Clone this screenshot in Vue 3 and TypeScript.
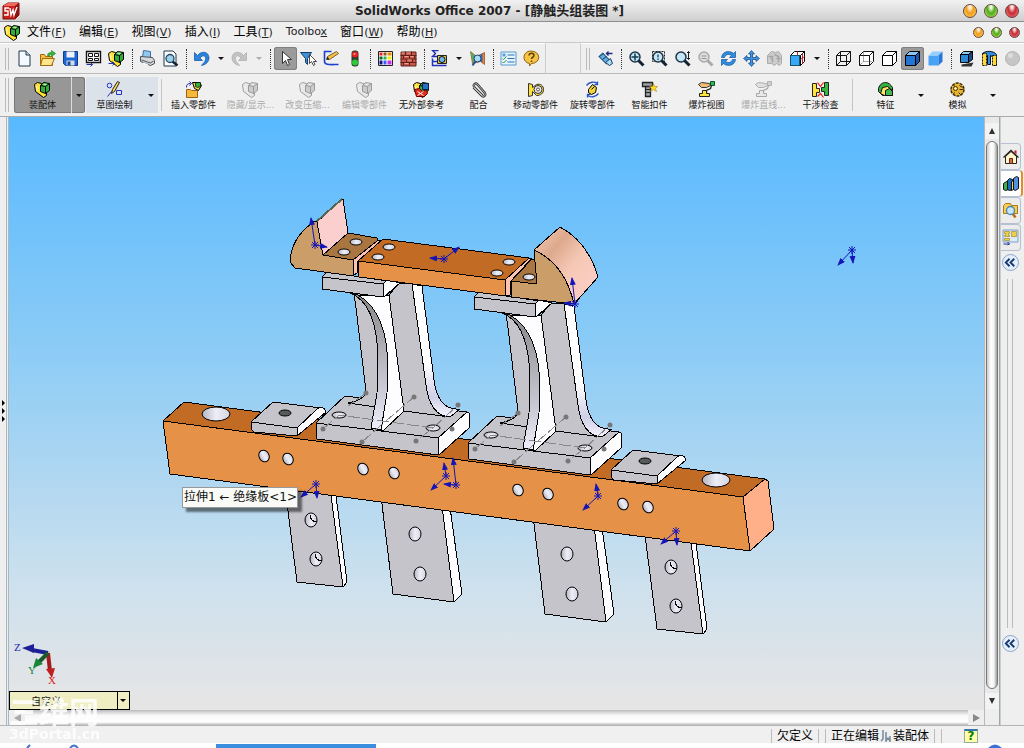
<script setup lang="ts">
interface Tool { kind?: 'sep' | 'arrow'; icon?: string; label?: string; active?: boolean; dim?: boolean }
interface Command { icon: string; label: string; dim?: boolean }
interface Triad { x: number; y: number; tips: [number, number][] }

const cube = (front: string, top: string, side: string, w = 1): string =>
  `<path fill="${front}" stroke="#000" stroke-width="${w}" d="M1 5h10v10H1z"/><path fill="${top}" stroke="#000" stroke-width="${w}" d="M1 5l4-4h10l-4 4z"/><path fill="${side}" stroke="#000" stroke-width="${w}" d="M11 5l4-4v10l-4 4z"/>`
const lens = (inner: string): string =>
  `<path d="M10 10l5 5" stroke="#123" stroke-width="3"/><circle cx="6.5" cy="6.5" r="5" fill="#c4e6f6" stroke="#1d3548" stroke-width="1.5"/>${inner}`
const block = '<path fill="#ffe13a" stroke="#000" d="M0 3l3-2 4 1v6l5 3v3l-3 2-8-6z"/><path fill="#fff5a0" d="M1 4l2 1v5L2 9z"/><path fill="#2fae3c" stroke="#000" d="M6 4l3-3 6 1v7l-4 3-5-2z"/><path d="M6 4l5 1 4-3M11 5v7" stroke="#000" fill="none"/><path fill="#a4eca0" d="M8 3.500l2-1.500 3 .5-2 1.500z"/>'

const icons: Record<string, string> = {
  block,
  blank: '<path fill="#f4f9ff" stroke="#23364c" d="M2.500 .5h7l4 4v11h-11z"/><path fill="#bdd7ee" stroke="#23364c" d="M9.500 .5v4h4"/>',
  open: '<path fill="#f4bd3f" stroke="#a06a10" d="M1 4h4l1 2h7v9H1z"/><path fill="#ffe58c" stroke="#a06a10" d="M3 8h12l-3 7H1z"/><path d="M8 5c0-3 3-3 4-3V0l4 3-4 3V4c-2 0-2 0-2 2z" fill="#35b536" stroke="#197a1c" stroke-width=".6"/>',
  save: '<path fill="#1e67d3" stroke="#123c86" d="M1 1h14v14H3l-2-2z"/><path fill="#eef3fa" d="M4 1h8v6H4z"/><path fill="#d5dbe5" d="M4 10h8v5H4z"/><path fill="#1a4b9c" d="M5 11h3v4H5z"/>',
  sheet: '<path fill="#fff" stroke="#111" stroke-width="1.400" d="M1 1h14v11H1z"/><path fill="none" stroke="#111" d="M3 3h4v3H3zM9 3h4v3H9zM3 8h4v2H3zM9 8h4v2H9z"/><path d="M1 14h6M5 12l2 2-2 2" stroke="#23a" fill="none"/>',
  blockArrow: block + '<path d="M0 13h6M4 11l2 2-2 2" stroke="#23a" fill="none"/>',
  print: '<path fill="#8fc9ee" stroke="#3f6f9a" d="M4 0l7 1v7l-8-1z"/><path fill="#d5d8dc" stroke="#4c5157" d="M1 6l12 1 2 3v3l-4 2-10-4z"/><path fill="#555" d="M2 9l9 3 3-2v1l-3 2-9-3z"/><path fill="#fff" d="M4 12l5 2-2 1-4-2z"/>',
  preview: '<path fill="#fff" stroke="#23364c" d="M1.500 .5h9l3 3v12h-12z"/><path d="M10 11l5 4" stroke="#123" stroke-width="2.500"/><circle cx="7.500" cy="8" r="4" fill="#9fd0ea" stroke="#1d4868" stroke-width="1.300"/>',
  undo: '<path d="M1 2v8h8L6.500 7.500C9 4 13 5 12 9c-.5 3-3 4-4 6 5-1 7.500-4 7.500-8C15 1 8 0 4 5z" fill="#2a83dc" stroke="#0e4f9a" stroke-width=".7"/>',
  redo: '<path d="M15 2v8H7l2.500-2.500C7 4 3 5 4 9c.5 3 3 4 4 6C3 14 .5 11 .5 7 1 1 8 0 12 5z" fill="#c3c3c3" stroke="#aaa" stroke-width=".7"/>',
  cursor: '<path d="M5 1v12l3-3 2 5 2-1-2-5h4z" fill="#fff" stroke="#333"/>',
  filter: '<path d="M0 2h11L7 8v6l-2-2V8z" fill="#3f90d4" stroke="#123d66"/><path d="M9 4v9l2-2 2 4 1.500-1-1.500-3h3z" fill="#fff" stroke="#222" stroke-width=".8"/>',
  sketch: '<path d="M8 1H1v10c0 4 6 3 14 3" fill="none" stroke="#1b3fd0" stroke-width="1.600"/><path d="M3 9l1-3L13 1l2 2-9 6z" fill="#ffbd42" stroke="#663"/><path fill="#222" d="M3 9l1-3 2 3z"/>',
  light: '<rect x="5" y="0" width="7" height="16" rx="3" fill="#2c3b33"/><circle cx="8.500" cy="4" r="3" fill="#e5231c"/><circle cx="8.500" cy="12" r="3" fill="#2dcc35"/><circle cx="8" cy="3.500" r="1" fill="#ff9a90"/>',
  palette: '<path fill="#fff" stroke="#222" d="M1 1h14v14H1z"/><path fill="#e22" d="M2 2h3v3H2z"/><path fill="#852" d="M6 2h3v3H6z"/><path fill="#e80" d="M10 2h4v3h-4z"/><path fill="#063" d="M2 6h3v3H2z"/><path fill="#3a5" d="M6 6h3v3H6z"/><path fill="#ee1" d="M10 6h4v3h-4z"/><path fill="#118" d="M2 10h3v4H2z"/><path fill="#36e" d="M6 10h3v4H6z"/><path fill="#c3d" d="M10 10h4v4h-4z"/>',
  brick: '<path fill="#c8584a" stroke="#5f201b" d="M.5 1.500h15v14H.5z"/><path stroke="#651f1a" d="M0 5h16M0 8.500h16M0 12h16M5 1v4M11 1v4M3 5v3M9 5v3M14 5v3M6 9v3M12 9v3M3 12v3M9 12v3"/><path stroke="#e8a48e" d="M1 2.500h3M6 2.500h4M4 6h4M10 6h3M7 9.500h4M4 13h4"/>',
  measure: '<path d="M7 0H1l3 3-3 3h6" fill="none" stroke="#1b2fb0" stroke-width="1.300"/><path d="M1 8v7h14M1 11h5" stroke="#23b" fill="none" stroke-width="1.500"/><path fill="#e0c33e" stroke="#222" d="M6 5h9v8H6z"/><circle cx="10.500" cy="9" r="3" fill="#6cb6e6" stroke="#113"/>',
  check: '<path d="M1 1l6 5 8-4v12l-4-3-8 2z" fill="#f08431" stroke="#8a4a15" stroke-width=".7"/><path d="M1 1l8 8-5 4z" fill="#42b364"/><path d="M11 4l2-1v9l-2-1z" fill="#2f66c4"/><circle cx="8" cy="8" r="3.500" fill="#a8dcf2" stroke="#19407b"/><path d="M6 11l-3 4" stroke="#234f9c" stroke-width="2"/>',
  list: '<path fill="#e4f3fd" stroke="#5b99cc" d="M.5 1.500h15v13H.5z"/><path stroke="#2d72b8" d="M7 4.500h7M7 8h7M7 11.500h7"/><path fill="#5da0d8" d="M2 3h3v3H2z"/><path d="M2 8l1 1 3-3M2 11.500l1 1 3-3" stroke="#2a9a44" fill="none"/>',
  help: '<path d="M8 .6a7 6 0 0 1 0 12.400l-2 2.500V13A6.500 6.200 0 0 1 8 .6z" fill="#f6c343" stroke="#8b6410"/><path d="M5.500 5c0-3 5-3 5 0 0 2-2.500 1.500-2.500 3.500M8 10v1.600" stroke="#5e430a" stroke-width="1.500" fill="none"/>',
  scope: '<path d="M3 4l8 8" stroke="#173a66" stroke-width="6"/><path d="M3 4l8 8" stroke="#5eb1e0" stroke-width="4"/><path d="M2 6l4-3M5 9l4-3" stroke="#173a66"/><path fill="#a8def5" stroke="#173a66" d="M8 12l5-4 2 5-3 2z"/><path d="M15 3H9M11 1L9 3l2 2" stroke="#1a2a86" fill="none" stroke-width="1.300"/>',
  zoomFit: lens('<path d="M6.500 3v7M3 6.500h7" stroke="#13384e" stroke-width="1.500"/>'),
  zoomArea: '<path d="M1 1h12v10H1z" fill="none" stroke="#222" stroke-dasharray="2 1"/>' + lens('<path d="M6.500 4v3M6.500 8v1.500" stroke="#13384e" stroke-width="1.200"/>'),
  zoomIn: lens('<path d="M14 1v8M12.500 2.500L14 1l1.500 1.500M12.500 7.500L14 9l1.500-1.500" stroke="#222" fill="none"/>'),
  zoomOut: '<path d="M10 10l5 5" stroke="#aaa" stroke-width="3"/><circle cx="6.500" cy="6.500" r="5" fill="#ddd" stroke="#aaa" stroke-width="1.500"/><path d="M4 5.500h5M4 8h5" stroke="#999"/>',
  rotate: '<path d="M1 7c1-7 9-7 12-4l2-2v6H9l2-2C8 3 5 4 4 7zM15 9c-1 7-9 7-12 4l-2 2V9h6l-2 2c3 2 6 1 7-2z" fill="#2f8de0" stroke="#15549c" stroke-width=".7"/>',
  pan: '<path d="M8 0l3 3.500H9V7h3.500V5L16 8l-3.500 3V9H9v3.500h2L8 16l-3-3.500h2V9H3.500v2L0 8l3.500-3v2H7V3.500H5z" fill="#3a96e8" stroke="#123e7a" stroke-width=".7"/>',
  views: '<path d="M1 5l4-4 4 1 3-1 3 4v8l-2 2-3-2-2 2-3-2H1z" fill="#ccc" stroke="#aaa"/><path d="M2 6h4v6M8 4l4 2v6M4 8h1M10 8h4" stroke="#a4a4a4" stroke-width="1.400" fill="none"/>',
  viewCube: cube('#2a9df0', '#fff', '#fff') + '<path d="M8 1v4M13 3v10M11 9l4-3" stroke="#d22"/><path fill="#38a8f8" stroke="#156" d="M1 5h9v10H1z"/>',
  wire: '<path d="M1 5h10v10H1zM5 1h10v10H5zM1 5l4-4M11 5l4-4M11 15l4-4M1 15l4-4" fill="none" stroke="#111"/>',
  hidden: '<path d="M1 5h10v10H1zM1 5l4-4h10v10l-4 4M11 5l4-4" fill="#fff" stroke="#111"/><path d="M5 2v9h9M5 11l-4 4" fill="none" stroke="#555" stroke-dasharray="1 1"/>',
  lined: cube('#fff', '#fff', '#fff'),
  shadedEdge: cube('#2375d8', '#84c8fb', '#1b55ad'),
  shaded: '<path fill="#4aa2f5" d="M1 5h10v10H1z"/><path fill="#94cdff" d="M1 5l4-4h10l-4 4z"/><path fill="#2478dc" d="M11 5l4-4v10l-4 4z"/>',
  shadow: '<path fill="#333" d="M3 14l12-2-2 4H3z"/><path fill="#2a8ad6" stroke="#000" d="M2 4h8v8H2z"/><path fill="#8bd0f5" stroke="#000" d="M2 4l3-3h9l-4 3z"/><path fill="#184c8c" stroke="#000" d="M10 4l4-3v8l-4 3z"/>',
  section: '<path fill="#2f8be0" stroke="#111" d="M1 3c3-3 11-3 14 1v11h-3V7L9 5v9H6V5L1 4z"/><path fill="#ffd831" stroke="#111" stroke-dasharray="2 1" d="M1 3h4v12H1zM11 5h4v10h-4z"/>',
  ball: '<circle cx="8" cy="8" r="7" fill="#c6c6c6" stroke="#b4b4b4"/><circle cx="6" cy="5" r="2.500" fill="#ddd"/>',
  draft: '<circle cx="3" cy="4" r="2.300" fill="none" stroke="#23b"/><path fill="none" stroke="#23b" d="M10 9h5v4h-5zM1 15L6 9"/><path d="M5 12l1-4 5-8 2 1-5 9z" fill="#ffd75d" stroke="#222"/>',
  insert: '<path d="M1 8h4l1 1h6v7H1z" fill="#f6b93c" stroke="#9a6312"/><path d="M1 6c0-3 1-4 4-4M4 0l2 2-2 2" stroke="#22a" fill="none"/><path d="M7 1h7l2 3-3 5-4-2z" fill="#f4d93a" stroke="#000"/><path d="M10 1h5v4l-3 1-2-1z" fill="#35b03f" stroke="#000" stroke-width=".7"/>',
  external: block + '<path d="M1 8l5-1 3 3 4-2 1 4-3 3H3z" fill="#e22c1c" stroke="#600"/><path fill="#2772c9" stroke="#123" d="M9 2h6v6H9z"/><path d="M4 10l6 4M10 10l-6 4" stroke="#fff"/>',
  clip: '<path d="M12 14L4 6c-2-3 1-5 3-3l7 8c2 3-1 5-3 3L3 6" fill="none" stroke="#333" stroke-width="2.400"/><path d="M12 14L4 6c-2-3 1-5 3-3l7 8c2 3-1 5-3 3L3 6" fill="none" stroke="#ddd" stroke-width=".8"/>',
  move: '<path d="M1 2l4 1v3l4-3c4-1 7 1 7 5s-3 6-7 6l-4-4v4l-4 1z" fill="#ffe03a" stroke="#333"/><circle cx="10.500" cy="8" r="4" fill="#e8e8e8" stroke="#333"/><circle cx="10.500" cy="8" r="1.500" fill="#fff" stroke="#555"/>',
  turn: '<path d="M2 4c3-4 8-4 11-2M13 0v3h-3M14 12c-3 4-8 4-11 2M3 16v-3h3" fill="none" stroke="#2755c8" stroke-width="1.300"/><path d="M4 8l4-5 4 3-1 5-4 2-3-2z" fill="#f4d637" stroke="#000"/><path d="M7 8l3-3" stroke="#000"/>',
  smart: '<path d="M1 1h10v4H1zM4 5h5v10H4z" fill="#9ba1a5" stroke="#222" stroke-width="1.300"/><path d="M4 8h5M4 11h5" stroke="#222"/><path d="M12 2l1 3h3l-2 2 1 3-3-2-3 2 1-3-2-2h3z" fill="#ffdf2d" stroke="#a48110" stroke-width=".6"/>',
  explode: '<path d="M0 3l3-2 8 1 1 2-4 2H3z" fill="#f2bb74" stroke="#333"/><path fill="#38b848" stroke="#053" d="M12 0h4v4h-4z"/><path d="M13 4l-1 3-4 2v3" stroke="#222" fill="none" stroke-width="1.300"/><path d="M1 12h3V9h4v3h3v3H1z" fill="#f8e43c" stroke="#222"/>',
  clash: '<path d="M0 2h4v5h3v4H4v4H0z" fill="#ffe23a" stroke="#222"/><path d="M16 1h-4v5H9v4h3v4h4z" fill="#34b641" stroke="#222"/><path d="M5 1l3 4 3-4M5 15l3-3 3 4" stroke="#e21" fill="none" stroke-width="1.200"/>',
  feature: '<path d="M1 10V7c1-4 4-6 7-6s5 2 7 5v8H5z" fill="#35b141" stroke="#111"/><path d="M3 12l2-6 5-1 5 4v5H7z" fill="#ffe462" stroke="#111"/><path d="M8 14V9l4-2 3 3v4z" fill="#42ba4e" stroke="#111"/>',
  gear: '<circle cx="8" cy="8" r="6.500" fill="#e8b532" stroke="#3a2b05" stroke-width="1.500" stroke-dasharray="3 1"/><circle cx="6" cy="7" r="2" fill="#fff0a0" stroke="#3a2b05"/><path d="M10 4l3 2M10 8h4M9 11l2 2M5 11l-1 2M4 3l1 2" stroke="#3a2b05"/>',
  home: '<path fill="#fff7c9" stroke="#222" d="M3 8v7h11V8L8.500 3z"/><path d="M1 9l7.500-7L16 9" stroke="#222" fill="none" stroke-width="1.300"/><path fill="#c12" d="M12 2h2v4l-2-2z"/><path fill="#d7722a" stroke="#622" d="M7 10h3v5H7z"/>',
  library: '<path fill="#35b54c" stroke="#111" d="M0 8l3-2 2 1v7l-3 1-2-1z"/><path fill="#1b6dc0" stroke="#111" d="M4 5l2-2 3 1v10l-3 1-2-1z"/><path fill="#ffe03a" stroke="#111" d="M8 6l2-1v9l-2 1z"/><path fill="#5590e4" stroke="#111" d="M10 3l3-2 2 1v11l-3 2-2-1z"/>',
  search: '<path fill="#f8cb51" stroke="#ad7b1c" d="M1 3l2-2h5l1 2h6v8H1z"/><path d="M10 11l3 4" stroke="#b56b1a" stroke-width="2.500"/><circle cx="8" cy="8" r="4" fill="#c3e7fb" stroke="#4a85ae" stroke-width="1.300"/>',
  views2: '<path fill="#dce9f8" stroke="#7aa0cf" d="M.5 .5h15v12H.5z"/><path fill="#ecd04a" stroke="#a98d26" stroke-width=".7" d="M2 2h5v2H6v2h1v1H2V6h1V4H2zM9 2h5v5H9zM2 9h5v2H2z"/><path d="M1 14.500h6M5 12.500l2 2-2 1" stroke="#1c2f9a" fill="none"/>',
}

const sep: Tool = { kind: 'sep' }
const standardTools: Tool[] = [
  { icon: 'blank', label: '新建' }, { icon: 'open', label: '打开' }, { icon: 'save', label: '保存' },
  { icon: 'sheet', label: '工程图' }, { icon: 'blockArrow', label: '装配' }, sep,
  { icon: 'print', label: '打印' }, { icon: 'preview', label: '预览' }, sep,
  { icon: 'undo', label: '撤销' }, { kind: 'arrow', label: '撤销列表' },
  { icon: 'redo', label: '重做' }, { kind: 'arrow', label: '重做列表', dim: true }, sep,
  { icon: 'cursor', label: '选择', active: true }, { icon: 'filter', label: '过滤器' },
  { icon: 'sketch', label: '草图' }, { icon: 'light', label: '重建' }, sep,
  { icon: 'palette', label: '颜色' }, { icon: 'brick', label: '纹理' }, sep,
  { icon: 'measure', label: '测量' }, { kind: 'arrow', label: '测量列表' }, { icon: 'check', label: '检查' }, sep,
  { icon: 'list', label: '选项' }, { icon: 'help', label: '帮助' },
]
const viewTools: Tool[] = [
  { icon: 'scope', label: '上一视图' }, sep,
  { icon: 'zoomFit', label: '整屏显示' }, { icon: 'zoomArea', label: '局部放大' }, { icon: 'zoomIn', label: '放大' },
  { icon: 'zoomOut', label: '放大选取' }, { icon: 'rotate', label: '旋转' }, { icon: 'pan', label: '平移' },
  { icon: 'views', label: '三维视图' }, { icon: 'viewCube', label: '视图定向' }, { kind: 'arrow', label: '视图列表' }, sep,
  { icon: 'wire', label: '线架图' }, { icon: 'hidden', label: '隐藏线可见' }, { icon: 'lined', label: '消除隐藏线' },
  { icon: 'shadedEdge', label: '带边线上色', active: true }, { icon: 'shaded', label: '上色' }, sep,
  { icon: 'shadow', label: '阴影' }, { icon: 'section', label: '剖面' }, { icon: 'ball', label: '渲染' },
]
const commands: Command[] = [
  { icon: 'insert', label: '插入零部件' },
  { icon: 'block', label: '隐藏/显示...', dim: true },
  { icon: 'block', label: '改变压缩...', dim: true },
  { icon: 'block', label: '编辑零部件', dim: true },
  { icon: 'external', label: '无外部参考' },
  { icon: 'clip', label: '配合' },
  { icon: 'move', label: '移动零部件' },
  { icon: 'turn', label: '旋转零部件' },
  { icon: 'smart', label: '智能扣件' },
  { icon: 'explode', label: '爆炸视图' },
  { icon: 'explode', label: '爆炸直线...', dim: true },
  { icon: 'clash', label: '干涉检查' },
]
const tailCommands: Command[] = [{ icon: 'feature', label: '特征' }, { icon: 'gear', label: '模拟' }]
const menus: [string, string, string][] = [
  ['文件', 'F', ''], ['编辑', 'E', ''], ['视图', 'V', ''], ['插入', 'I', ''], ['工具', 'T', ''],
  ['', 'x', 'Toolbo'], ['窗口', 'W', ''], ['帮助', 'H', ''],
]
const lights: string[] = ['amber', 'green', 'red']
const paneTabs: { icon: string; label: string }[] = [
  { icon: 'home', label: '资源' }, { icon: 'library', label: '设计库' },
  { icon: 'search', label: '文件探索器' }, { icon: 'views2', label: '查看调色板' },
]

const beamHoles: [number, number][] = [[264, 456], [288, 459], [363, 469], [394, 473], [518, 490], [548, 494], [623, 504], [648, 507]]
const sketchDots: [number, number][] = [[366, 393], [414, 397], [458, 405], [323, 429], [362, 442], [416, 441], [452, 429]]
const triads: Triad[] = [
  { x: 315, y: 245, tips: [[311, 218], [327, 247]] },
  { x: 444, y: 259, tips: [[459, 247], [430, 258]] },
  { x: 575, y: 304, tips: [[572, 278], [564, 303]] },
  { x: 852, y: 250, tips: [[838, 265], [853, 263]] },
  { x: 446, y: 476, tips: [[444, 463], [431, 490]] },
  { x: 456, y: 485, tips: [[453, 458], [444, 484]] },
  { x: 316, y: 484, tips: [[301, 497], [317, 498]] },
  { x: 598, y: 496, tips: [[596, 484], [583, 510]] },
  { x: 676, y: 531, tips: [[661, 544], [677, 545]] },
]
const star = (t: Triad): string =>
  `M${t.x - 4} ${t.y}h8M${t.x} ${t.y - 4}v8M${t.x - 3} ${t.y - 3}l6 6M${t.x + 3} ${t.y - 3}l-6 6`
</script>

<template>
  <div class="window">
    <header class="titlebar">
      <svg class="logo" viewBox="0 0 18 18" aria-hidden="true">
        <path d="M1 4l5-3h11v12l-4 4H1z" fill="#c8201c" stroke="#7c0f0d" />
        <path d="M1 4l5-3h11l-4 3z" fill="#f0695c" />
        <path d="M13 4l4-3v12l-4 4z" fill="#8d1210" />
        <path d="M7 6H3v3h3v4H2M8 6l1 7 2-5 1 5 3-8" fill="none" stroke="#fff" stroke-width="1.400" />
      </svg>
      <h1>SolidWorks Office 2007 - [<span>静触头组装图</span> *]</h1>
      <div class="lights">
        <button v-for="c in lights" :key="c" type="button" :class="['orb', c]" :aria-label="c"></button>
      </div>
    </header>

    <nav class="menubar">
      <svg class="logo" viewBox="-.5 -.5 17 17" aria-hidden="true" v-html="icons.block"></svg>
      <button v-for="m in menus" :key="m[1]" type="button" class="menu"><template v-if="m[0]"><span class="han">{{ m[0] }}</span>(<u>{{ m[1] }}</u>)</template><template v-else>{{ m[2] }}<u>{{ m[1] }}</u></template></button>
      <div class="lights small">
        <button v-for="c in lights" :key="c" type="button" :class="['orb', c]" :aria-label="'文档 ' + c"></button>
      </div>
    </nav>

    <div class="toolrow">
      <div class="strip">
        <span class="grip"></span>
        <template v-for="(t, i) in standardTools" :key="i">
          <span v-if="t.kind === 'sep'" class="dots"></span>
          <button v-else-if="t.kind === 'arrow'" type="button" :class="['drop', { dim: t.dim }]" :aria-label="t.label"></button>
          <button v-else type="button" :class="['tool', { active: t.active }]" :aria-label="t.label">
            <svg viewBox="-.5 -.5 17 17" v-html="icons[t.icon!]"></svg>
          </button>
        </template>
      </div>
      <div class="strip second">
        <span class="grip"></span>
        <template v-for="(t, i) in viewTools" :key="i">
          <span v-if="t.kind === 'sep'" class="dots"></span>
          <button v-else-if="t.kind === 'arrow'" type="button" class="drop" :aria-label="t.label"></button>
          <button v-else type="button" :class="['tool', { active: t.active }]" :aria-label="t.label">
            <svg viewBox="-.5 -.5 17 17" v-html="icons[t.icon!]"></svg>
          </button>
        </template>
      </div>
    </div>

    <div class="commandrow">
      <span class="grip"></span>
      <div class="mode pressed">
        <button type="button" class="cmd"><svg viewBox="-.5 -.5 17 17" v-html="icons.block"></svg>装配体</button>
        <button type="button" class="drop" aria-label="装配体列表"></button>
      </div>
      <div class="mode pale">
        <button type="button" class="cmd"><svg viewBox="-.5 -.5 17 17" v-html="icons.draft"></svg>草图绘制</button>
        <button type="button" class="drop" aria-label="草图绘制列表"></button>
      </div>
      <span class="rule"></span>
      <button v-for="c in commands" :key="c.label" type="button" :class="['cmd', { dim: c.dim }]">
        <svg viewBox="-.5 -.5 17 17" v-html="icons[c.icon]"></svg>{{ c.label }}
      </button>
      <span class="rule"></span>
      <div v-for="c in tailCommands" :key="c.label" class="mode tail">
        <button type="button" class="cmd"><svg viewBox="-.5 -.5 17 17" v-html="icons[c.icon]"></svg>{{ c.label }}</button>
        <button type="button" class="drop" :aria-label="c.label + '列表'"></button>
      </div>
    </div>

    <main class="workspace">
      <div class="splitter"><i></i><i></i><i></i></div>
      <section class="view">
        <div class="canvas">
          <svg class="scene" viewBox="9 117 975 593" role="img" aria-label="静触头组装图">
            <defs>
              <linearGradient id="web" x1="0" y1="0" x2="0" y2="1">
                <stop offset="0" stop-color="#858588" /><stop offset=".35" stop-color="#aaaab0" />
                <stop offset=".75" stop-color="#d0d0dc" /><stop offset="1" stop-color="#f0f0fc" />
              </linearGradient>
              <linearGradient id="fillet" x1="0" y1="0" x2="0" y2="1">
                <stop offset=".6" stop-color="#fff" /><stop offset=".85" stop-color="#cfcfe6" /><stop offset="1" stop-color="#f4f4ff" />
              </linearGradient>
              <linearGradient id="blade" x1="0" y1="0" x2="1" y2="1">
                <stop offset="0" stop-color="#f8cdb8" /><stop offset=".3" stop-color="#dda98d" />
                <stop offset=".55" stop-color="#f5c8b5" /><stop offset="1" stop-color="#ffd0cc" />
              </linearGradient>
              <linearGradient id="bore" x1="0" y1="0" x2="1" y2="0">
                <stop offset="0" stop-color="#b4b4be" /><stop offset=".5" stop-color="#eeeef8" /><stop offset="1" stop-color="#d4d4df" />
              </linearGradient>
              <marker id="tip" viewBox="0 0 8 6" refX="7" refY="3" markerWidth="8" markerHeight="6" markerUnits="userSpaceOnUse" orient="auto">
                <path d="M0 0l8 3-8 3z" fill="#1414b8" />
              </marker>
              <g id="narrowLeg">
                <path class="gray" d="M284 480l13 102 46 5-14-107z" />
                <path class="white" d="M329 480l14 107 4-5-13-102z" />
                <g class="bore"><ellipse cx="311" cy="520" rx="6" ry="7" /><ellipse cx="316" cy="559" rx="6" ry="7" /></g>
                <path class="line" d="M310 515q1 7 7 7M315 554q1 7 7 7" />
              </g>
              <g id="wideLeg">
                <path class="gray" d="M381 496l12 98 61 8-13-104z" />
                <path class="white" d="M441 498l13 104 8-8-13-94z" />
                <g class="bore"><ellipse cx="415" cy="534" rx="6" ry="7" /><ellipse cx="420" cy="574" rx="6" ry="7" /></g>
              </g>
              <g id="pad">
                <path class="gray" d="M251 422l22-20 48 6-24 20z" />
                <path class="gray" d="M251 422l46 6v8l-43-4-3-3z" />
                <path class="white" d="M297 428l20-19q7-4 9 3l-29 24z" />
                <g class="bore"><ellipse cx="285" cy="413" rx="6" ry="3" class="deep" /></g>
              </g>
              <g id="column">
                <path class="gray" d="M316 423l29-27 122 16-29 26z" />
                <path class="gray" d="M316 423l122 15v17l-121-16z" />
                <path class="white" d="M438 438l29-26 2 1v15l-30 27z" />
                <g class="bore"><ellipse cx="339" cy="415" rx="7" ry="3" /><ellipse cx="433" cy="428" rx="7" ry="3" /></g>
                <path d="M354 294l2 14 10 83q-1 9-18 12l28 4 5-80-16-32z" fill="#c6c4cb" />
                <path class="line" d="M354 294l2 14 10 83q-1 9-18 12l28 4" />
                <path d="M350 293q27 10 28 66l-1 34-6 35 10 2 6-37 1-23q0-58-30-75z" fill="url(#web)" stroke="#000" />
                <path class="white" d="M358 295q30 17 30 75l-1 23-6 37h3l20-19-4-31-11-85z" />
                <path class="gray" d="M389 295l10-12 13 1 14 101q4 31 24 32l-46-6-4-31z" />
                <path d="M412 284l10 2 12 94q4 31 26 29l-10 8q-20-1-24-32z" fill="url(#fillet)" stroke="#000" />
                <path class="gray" d="M322 277l5-5 61 9-5 3v13l-61-8z" />
                <path class="line" d="M322 277l61 7" />
                <path class="white" d="M383 284l4-4 13 3-16 14z" />
                <path d="M323 429l16-14 94 13-17 13M362 442l18-16 34-29M433 428l25-23M366 393l-18 13" fill="none" stroke="#888" stroke-dasharray="12 3" />
                <g class="round"><circle v-for="(d, i) in sketchDots" :key="i" :cx="d[0]" :cy="d[1]" r="2.500" fill="#777" /></g>
              </g>
            </defs>

            <g class="model">
              <use href="#narrowLeg" /><use href="#wideLeg" />
              <use href="#wideLeg" x="152" y="20" /><use href="#narrowLeg" x="360" y="47" />

              <path d="M163 421l21-19 581 77-22 18z" fill="#c26b24" stroke="#000" />
              <path d="M163 421l580 76 7 54-580-77z" fill="#e59248" stroke="#000" />
              <path d="M743 497l22-18 3 2 6 48-24 22z" fill="#ffb089" stroke="#000" />
              <g class="bore">
                <ellipse cx="216" cy="414" rx="14" ry="7" /><ellipse cx="716" cy="480" rx="14" ry="7" />
                <ellipse v-for="(h, i) in beamHoles" :key="i" :cx="h[0]" :cy="h[1]" rx="5" ry="6" :transform="`rotate(-30 ${h[0]} ${h[1]})`" />
              </g>
              <use href="#pad" /><use href="#pad" x="360" y="48" />
              <use href="#column" /><use href="#column" x="152" y="20" />

              <path d="M323 255l25-22 29 5v3l-24 19z" fill="#a97642" stroke="#000" />
              <path d="M317 222l25-23h1l5 34-25 22z" fill="#fccfcf" stroke="#000" />
              <path d="M316 222l26-23" stroke="#565" stroke-width="2" />
              <path d="M290 262q1-25 25-41l2 1 6 33 30 5v16l-58-8z" fill="#cb9d69" stroke="#000" />
              <path d="M353 260l24-19 5-1-24 21-1 12-4 3z" fill="#ffc4b0" stroke="#000" />
              <path d="M358 261l25-22 146 19-24 22z" fill="#c26b24" stroke="#000" />
              <path d="M358 261l147 19 1 16-147-19z" fill="#e59248" stroke="#000" />
              <path d="M505 280l24-22h3l-21 23-1 14-4 1z" fill="#ffc4b0" stroke="#000" />
              <path d="M511 281l21-22h3l2 25z" fill="#a97642" stroke="#000" />
              <path d="M534 250l26-23q28 15 38 50l-24 27z" fill="url(#blade)" stroke="#000" />
              <path d="M534 250q31 14 40 54l-63-7v-16l26 3z" fill="#cb9d69" stroke="#000" />
              <g class="bore">
                <ellipse cx="356" cy="242" rx="6" ry="3" /><ellipse cx="344" cy="252" rx="6" ry="3" />
                <ellipse cx="389" cy="247" rx="6" ry="3" /><ellipse cx="378" cy="257" rx="6" ry="3" />
                <ellipse cx="509" cy="262" rx="6" ry="3" /><ellipse cx="497" cy="273" rx="6" ry="3" />
                <ellipse cx="529" cy="277" rx="6" ry="3" />
              </g>
            </g>

            <g v-for="(t, i) in triads" :key="i" stroke="#1414b8" fill="none">
              <path :d="star(t)" />
              <line v-for="(p, j) in t.tips" :key="j" :x1="t.x" :y1="t.y" :x2="p[0]" :y2="p[1]" marker-end="url(#tip)" />
            </g>

            <g fill="none" stroke-width="4">
              <path d="M48 653l-16-3" stroke="#1c2195" /><path d="M22 648l12-4v9z" fill="#1c2195" />
              <path d="M48 653l2 18" stroke="#a51b1b" /><path d="M52 678l-6-9 9-1z" fill="#c01f1f" />
              <path d="M48 653l-9 9" stroke="#1c5a2b" /><path d="M33 668l3-10 7 6z" fill="#1b8636" />
            </g>
            <g class="axis">
              <text x="14" y="651" fill="#2424b4">Z</text><text x="28" y="674" fill="#1b8636">Y</text><text x="48" y="684" fill="#e01818">X</text>
            </g>
          </svg>
          <div class="tooltip">拉伸1 ← 绝缘板&lt;1&gt;</div>
          <label class="config"><select aria-label="视图配置"><option>自定义</option></select></label>
          <div class="watermark"><b>三维网</b><span>3dPortal.cn</span></div>
        </div>
        <div class="hscroll"><button type="button" class="left" aria-label="向左"></button><button type="button" class="right" aria-label="向右"></button></div>
      </section>
      <div class="vscroll">
        <button type="button" class="up" aria-label="向上"></button>
        <span class="thumb"></span>
        <button type="button" class="down" aria-label="向下"></button>
        <span class="corner"></span>
      </div>
      <aside class="pane">
        <button v-for="(p, i) in paneTabs" :key="p.icon" type="button" :class="['tab', { current: i === 1 }]" :aria-label="p.label">
          <svg viewBox="-.5 -.5 17 17" v-html="icons[p.icon]"></svg>
        </button>
        <button type="button" class="collapse" aria-label="展开"><svg viewBox="0 0 16 16"><path d="M7 4L3 8l4 4M12 4L8 8l4 4" /></svg></button>
        <span class="rail"></span>
        <button type="button" class="collapse" aria-label="收起"><svg viewBox="0 0 16 16"><path d="M7 4L3 8l4 4M12 4L8 8l4 4" /></svg></button>
      </aside>
    </main>

    <footer class="status">
      <span class="cell">欠定义</span><span class="cell gap"></span><span class="cell">正在编辑<svg class="hourglass" viewBox="0 0 12 12"><path d="M3 0v9l-2 2M6 2v9l2-3 2 3V6" /></svg>装配体</span><span class="cell gap"></span><span class="cell gap"></span>
      <button type="button" class="hint" aria-label="快速提示">?</button>
    </footer>
    <div class="edge">
      <svg class="marks" viewBox="0 0 216 4"><path d="M27 4l3-3M70 4q4-5 8 0" stroke="#3f72c8" stroke-width="2" fill="none" /></svg>
      <i></i>
      <svg class="dome" viewBox="0 0 14 4"><path d="M0 4q7-7 14 0z" fill="#3b70d8" /></svg>
    </div>
  </div>
</template>

<style>
body { margin: 0; }
</style>

<style scoped>
.window { min-height: 100vh; display: flex; flex-direction: column; background: #efefef; color: #111; font: 12px/16px "DejaVu Sans", "Noto Sans CJK SC", sans-serif; overflow: hidden; }
button { appearance: none; border: 0; padding: 0; margin: 0; background: none; font: inherit; color: inherit; }
.titlebar { height: 21px; display: flex; align-items: center; background: linear-gradient(#f1f1f1, #cfcfcf); border-bottom: 1px solid #8f8f8f; }
.logo { width: 18px; height: 18px; margin-left: 2px; flex: none; }
h1 { flex: 1; margin: 0; padding-right: 4px; text-align: center; font-size: 12px; line-height: 20px; font-weight: 700; color: #222; white-space: nowrap; }
h1 span { font-size: 13px; }
.lights { display: flex; gap: 7px; margin-right: 5px; }
.lights.small { margin-left: auto; gap: 7px; margin-right: 4px; }
.orb { width: 14px; height: 14px; border-radius: 50%; border: 1px solid #644; }
.small .orb { width: 11px; height: 11px; }
.amber { background: radial-gradient(ellipse at 50% 15%, #fff6dd 10%, #f09a20 45%, #ffdc50 95%); }
.green { background: radial-gradient(ellipse at 50% 15%, #f0ffe0 10%, #52a81c 45%, #b4f060 95%); }
.red { background: radial-gradient(ellipse at 50% 15%, #ffe4e4 10%, #c42a34 45%, #ff7c7c 95%); }
.menubar { height: 20px; display: flex; align-items: center; gap: 13px; border-bottom: 1px solid #c9c9c9; }
.menubar .logo { width: 17px; height: 17px; margin: 0 -7px 0 4px; }
.menu { font-size: 11px; line-height: 18px; color: #222; white-space: nowrap; }
.han { font-size: 12px; color: #000; }
.toolrow { height: 30px; display: flex; border-bottom: 1px solid #bbb; }
.strip { display: flex; align-items: center; padding-right: 2px; border-right: 1px solid #ccc; border-top: 1px solid #fff; }
.second { margin-left: 34px; border-left: 1px solid #ccc; flex: 1; padding: 0; border-right: 0; }
.grip { width: 2px; height: 22px; margin: 0 4px 0 5px; border-left: 1px solid #bbb; border-right: 1px solid #bbb; flex: none; }
.tool { width: 23px; height: 23px; flex: none; display: flex; align-items: center; justify-content: center; border-radius: 3px; }
.tool svg { width: 17px; height: 17px; }
.tool.active { background: #9b9b9b; box-shadow: inset 0 0 0 1px #7f7f7f; }
.dots { width: 0; height: 20px; margin: 0 3px 0 4px; border-left: 1px dotted #333; flex: none; }
.drop { width: 15px; height: 22px; flex: none; display: flex; align-items: center; justify-content: center; }
.drop::after { content: ""; border: 3px solid transparent; border-top-color: #111; border-bottom: 0; }
.drop.dim { opacity: .3; }
.commandrow { height: 43px; display: flex; align-items: center; background: #f0f0f0; border-bottom: 1px solid #aaa; box-sizing: border-box; }
.commandrow > .grip { height: 34px; margin-right: 5px; }
.mode { display: flex; align-items: center; height: 36px; flex: none; }
.mode .drop { height: 36px; }
.pressed { background: #979797; border-radius: 3px; box-shadow: inset 0 0 0 1px #777; }
.pressed .drop { border-left: 1px solid #ddd; width: 14px; }
.pale { background: #dce2ea; margin-left: 1px; }
.cmd { width: 57px; flex: none; display: flex; flex-direction: column; align-items: center; gap: 1px; font-size: 9px; line-height: 12px; white-space: nowrap; padding-top: 2px; }
.cmd svg { width: 17px; height: 17px; }
.cmd.dim { color: #aaa; }
.cmd.dim svg { filter: grayscale(1); opacity: .35; }
.rule { height: 32px; border-left: 1px solid #c4c4c4; margin: 0 3px; flex: none; }
.tail .cmd { margin-left: 2px; width: 55px; }
.workspace { flex: 1; display: flex; min-height: 0; }
.splitter { width: 6px; display: flex; flex-direction: column; align-items: center; justify-content: center; gap: 2px; padding-bottom: 20px; border-right: 3px double #a7b8c0; flex: none; }
.splitter i { border: 3px solid transparent; border-left-color: #000; border-right: 0; }
.view { flex: 1; min-width: 0; display: flex; flex-direction: column; }
.canvas { flex: 1; position: relative; background: linear-gradient(#58b9ff 0%, #8acbf6 38%, #cfe1ed 80%, #e5e5e6 98%); }
.scene { display: block; width: 100%; height: 100%; }
.model { stroke-linejoin: round; shape-rendering: crispEdges; }
.gray { fill: #c6c4cb; stroke: #000; }
.white { fill: #fdfdff; stroke: #000; }
.line { fill: none; stroke: #000; }
.bore { fill: url(#bore); stroke: #000; shape-rendering: geometricPrecision; }
.deep { fill: #555a5a; }
.round { shape-rendering: geometricPrecision; }
.axis { font: 11px "Liberation Serif", serif; }
.tooltip { position: absolute; left: 173px; top: 370px; padding: 1px 0 1px 1px; background: #fafaf7; border: 1px solid #999; box-shadow: 4px 4px 2px rgba(0, 0, 0, .5); font-size: 12px; line-height: 17px; white-space: nowrap; }
.config { position: absolute; left: 0; bottom: 0; width: 121px; height: 19px; display: flex; }
.config select { appearance: none; width: 100%; border: 1px solid #000; border-radius: 0; margin: 0; padding: 0 0 0 21px; background: #eeeec2; font: 10px/16px "Noto Sans CJK SC", sans-serif; color: #111; }
.config::after { content: ""; position: absolute; right: 4px; top: 8px; border: 3px solid transparent; border-top-color: #000; border-bottom: 0; }
.config::before { content: ""; position: absolute; right: 12px; top: 0; height: 19px; border-left: 1px solid #000; }
.watermark { position: absolute; left: 0; bottom: -31px; z-index: 2; display: flex; flex-direction: column; color: #fff; opacity: .85; pointer-events: none; }
.watermark b { font: 700 30px/34px "Noto Sans CJK SC", sans-serif; }
.watermark span { font: 700 14px/14px "DejaVu Sans", sans-serif; }
.hscroll { height: 15px; display: flex; justify-content: space-between; background: linear-gradient(#bbb, #f8f8f8 35%, #fff 80%, #bbb); }
.hscroll button { width: 16px; display: flex; align-items: center; justify-content: center; background: #eee; }
.left::after { content: ""; border: 4px solid transparent; border-right: 7px solid #aaa; border-left: 0; }
.right::after { content: ""; border: 4px solid transparent; border-left: 7px solid #888; border-right: 0; }
.vscroll { width: 14px; display: flex; flex-direction: column; background: #e9e9e9; border-left: 1px solid #b9b9b9; border-right: 1px solid #9aa; flex: none; }
.vscroll button { height: 16px; display: flex; align-items: center; justify-content: center; background: #f3f3f3; }
.vscroll .up { margin-top: 6px; }
.up::after { content: ""; border: 3px solid transparent; border-bottom: 6px solid #333; border-top: 0; }
.down::after { content: ""; border: 3px solid transparent; border-top: 6px solid #333; border-bottom: 0; }
.thumb { flex: 1; margin: 2px 1px 4px; border: 1px solid #777; border-radius: 6px; background: linear-gradient(90deg, #ccc, #fff 40%, #f4f4f4 70%, #999); }
.corner { height: 16px; background: #eee; }
.pane { width: 23px; flex: none; display: flex; flex-direction: column; align-items: flex-start; padding-top: 26px; background: #efefef; border-left: 1px solid #ccc; }
.tab { width: 20px; height: 27px; box-sizing: border-box; display: flex; align-items: center; justify-content: center; border: 1px solid #b7c0d0; border-left: 0; border-radius: 0 4px 4px 0; background: #ececec; }
.tab svg { width: 17px; height: 17px; }
.tab.current { width: 22px; background: #fff; border-right: 2px solid #e88c24; }
.collapse { width: 18px; height: 18px; margin: 2px 0 8px 1px; }
.collapse svg { display: block; width: 15px; height: 15px; border: 1px solid #8aa3cd; border-radius: 50%; background: #e5effa; }
.collapse path { fill: none; stroke: #163b74; stroke-width: 2; }
.rail { flex: 1; width: 4px; margin: 0 0 4px 6px; border-left: 1px solid #bbb; border-right: 1px solid #bbb; }
.pane .collapse:last-child { margin-bottom: 73px; }
.status { height: 18px; box-sizing: border-box; display: flex; align-items: center; justify-content: flex-end; padding: 2px 46px 0 0; border-top: 1px solid #b4b4b4; background: #f0f0f0; white-space: nowrap; }
.cell { display: flex; align-items: center; padding: 0 5px; line-height: 14px; border-left: 1px solid #bbb; color: #000; }
.cell.gap { padding: 0 3px; height: 14px; }
.hourglass { width: 14px; height: 12px; }
.hourglass path { fill: none; stroke: #789; stroke-width: 1.500; }
.hint { width: 14px; height: 14px; margin-left: 16px; background: #ffffa8; border: 1px solid #9a9; border-top: 2px solid #37a; color: #087a10; font-weight: 700; font-size: 12px; line-height: 11px; box-sizing: border-box; }
.edge { height: 5px; background: #fff; display: flex; align-items: flex-end; }
.edge i { width: 160px; height: 4px; background: #3b8ddd; }
.marks { width: 216px; height: 4px; }
.dome { width: 14px; height: 4px; margin: 0 22px 0 auto; }
</style>
